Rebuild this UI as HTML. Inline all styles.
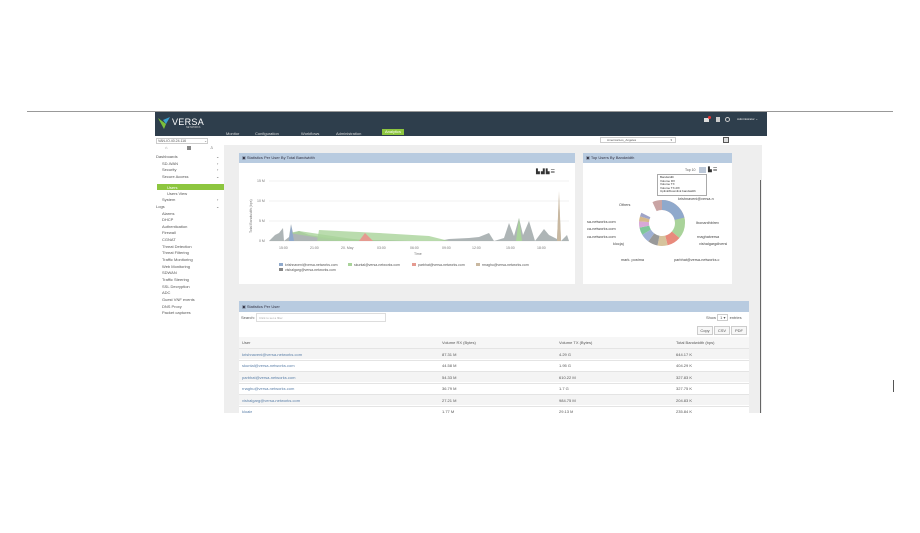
<!DOCTYPE html>
<html><head><meta charset="utf-8"><style>
*{margin:0;padding:0;box-sizing:border-box}
body{width:920px;height:533px;background:#fff;position:relative;overflow:hidden;font-family:"Liberation Sans",sans-serif;color:#555}
.a{position:absolute;white-space:nowrap}
.t{font-size:4px;line-height:5px}
.sb div{position:absolute;font-size:4px;line-height:5px;color:#555;white-space:nowrap}
</style></head><body>
<div class="a" style="left:27px;top:111px;width:866px;height:1px;background:#999"></div>
<!-- header -->
<div class="a" style="left:155px;top:112px;width:612px;height:24px;background:#2e3e4c"></div>
<svg class="a" style="left:157px;top:116px" width="14" height="14" viewBox="0 0 14 14"><path d="M1 2 L7 13 L9 8 Z" fill="#7bbf3a"/><path d="M6 4 L13 1 L9 8 Z" fill="#3aa0d0"/></svg>
<div class="a" style="left:172px;top:117px;font-size:9px;color:#fff;letter-spacing:.3px">VERSA</div>
<div class="a" style="left:186px;top:126px;font-size:2.5px;color:#ccc">NETWORKS</div>
<div class="a t" style="left:226px;top:131px;color:#ddd">Monitor</div>
<div class="a t" style="left:255px;top:131px;color:#ddd">Configuration</div>
<div class="a t" style="left:301px;top:131px;color:#ddd">Workflows</div>
<div class="a t" style="left:336px;top:131px;color:#ddd">Administration</div>
<div class="a t" style="left:382px;top:129px;width:22px;height:6px;background:#8dc63f;color:#fff;text-align:center;line-height:6px">Analytics</div>
<div class="a" style="left:704px;top:118px;width:5px;height:4px;background:#ddd"></div>
<div class="a" style="left:708px;top:116px;width:3px;height:3px;border-radius:2px;background:#e33"></div>
<div class="a" style="left:716px;top:117px;width:4px;height:5px;background:#ccc"></div>
<div class="a" style="left:725px;top:117px;width:5px;height:5px;border:1px solid #ccc;border-radius:3px"></div>
<div class="a" style="left:737px;top:117px;font-size:3px;color:#eee">Administrator ⌄</div>
<!-- toolbar -->
<div class="a t" style="left:156px;top:138px;width:52px;height:6px;border:1px solid #ccc;font-size:3.5px;line-height:5px;padding-left:1px">VAN-IO.40.24.116 <span style="float:right">⌄</span></div>
<div class="a t" style="left:600px;top:137px;width:76px;height:6px;border:1px solid #ccc;font-size:3px;padding-left:6px">America/Los_Angeles <span style="float:right;margin-right:3px">▾</span></div>
<div class="a" style="left:723px;top:137px;width:6px;height:6px;border:1px solid #555;background:#ddd"></div>
<!-- sidebar -->
<div class="a" style="left:165px;top:145px;font-size:4px;color:#777">⌂</div>
<div class="a" style="left:187px;top:146px;width:4px;height:4px;background:#888"></div>
<div class="a" style="left:210px;top:145px;font-size:4px;color:#777">♙</div>
<div class="a" style="left:157px;top:184px;width:67px;height:6px;background:#8dc63f"></div>
<div class="sb">
<div style="left:156px;top:154px">Dashboards</div><div style="left:216px;top:154px">⌄</div>
<div style="left:162px;top:161px">SD-WAN</div><div style="left:217px;top:161px">›</div>
<div style="left:162px;top:167px">Security</div><div style="left:217px;top:167px">›</div>
<div style="left:162px;top:174px">Secure Access</div><div style="left:216px;top:174px">⌄</div>
<div style="left:167px;top:185px;color:#fff">Users</div>
<div style="left:167px;top:191px">Users View</div>
<div style="left:162px;top:197px">System</div><div style="left:217px;top:197px">›</div>
<div style="left:156px;top:204px">Logs</div><div style="left:216px;top:204px">⌄</div>
<div style="left:162px;top:211px">Alarms</div>
<div style="left:162px;top:217px">DHCP</div>
<div style="left:162px;top:224px">Authentication</div>
<div style="left:162px;top:230px">Firewall</div>
<div style="left:162px;top:237px">CGNAT</div>
<div style="left:162px;top:244px">Threat Detection</div>
<div style="left:162px;top:250px">Threat Filtering</div>
<div style="left:162px;top:257px">Traffic Monitoring</div>
<div style="left:162px;top:264px">Web Monitoring</div>
<div style="left:162px;top:270px">SDWAN</div>
<div style="left:162px;top:277px">Traffic Steering</div>
<div style="left:162px;top:284px">SSL Decryption</div>
<div style="left:162px;top:290px">ADC</div>
<div style="left:162px;top:297px">Guest VNF events</div>
<div style="left:162px;top:304px">DNS Proxy</div>
<div style="left:162px;top:310px">Packet captures</div>
</div>
<!-- content bg -->
<div class="a" style="left:224px;top:145px;width:538px;height:268px;background:#eeeeee"></div>
<div class="a" style="left:760px;top:180px;width:1px;height:233px;background:#666"></div>
<!-- chart panel -->
<div class="a" style="left:239px;top:153px;width:336px;height:131px;background:#fff"></div>
<div class="a t" style="left:239px;top:153px;width:336px;height:10px;background:#b8cbe0;line-height:10px;padding-left:3px;color:#334">▣ Statistics Per User By Total Bandwidth</div>
<div class="a" style="left:536px;top:169px;font-size:5px;color:#333;letter-spacing:1px">▙▟▙☰</div>
<svg class="a" style="left:239px;top:163px" width="336" height="121">
<g font-size="3.5" fill="#777" font-family="Liberation Sans">
<text x="18" y="19">15 M</text><text x="18" y="39">10 M</text><text x="20" y="59">5 M</text><text x="20" y="79">0 M</text>
<text x="40" y="86">15:00</text><text x="71" y="86">21:00</text><text x="102" y="86">20. May</text><text x="138" y="86">03:00</text><text x="171" y="86">06:00</text><text x="203" y="86">09:00</text><text x="233" y="86">12:00</text><text x="267" y="86">15:00</text><text x="298" y="86">18:00</text>
<text x="175" y="92">Time</text>
<text transform="translate(13,70) rotate(-90)">Total Bandwidth (bps)</text>
</g>
<g stroke="#e3e3e3" stroke-width=".5"><line x1="30" y1="18" x2="330" y2="18"/><line x1="30" y1="38" x2="330" y2="38"/><line x1="30" y1="58" x2="330" y2="58"/><line x1="30" y1="78" x2="330" y2="78"/></g>
<path d="M30 78 L36 72 L40 70 L44 65 L45 78 L50 74 L52 61 L54 70 L60 68 L70 72 L90 75 L110 76 L130 77 L150 77 L170 78 L190 78 L200 78 L210 76 L230 75 L240 74 L250 70 L255 78 L265 75 L270 60 L275 73 L280 55 L284 72 L290 58 L296 78 L305 66 L310 72 L318 76 L320 35 L322 78 L328 72 L330 78 Z" fill="#9aa2a4" opacity=".8"/>
<path d="M50 70 L60 68 L100 74 L130 78 L100 78 Z" fill="#a9d39a" opacity=".8"/>
<path d="M78 78 L80 67 L140 70 L190 73 L210 78 Z" fill="#a9d39a" opacity=".8"/>
<path d="M120 78 L126 70 L134 78 Z" fill="#e59a90"/>
<path d="M277 78 L280 55 L283 78 Z" fill="#a9d39a"/>
<path d="M50 78 L52 62 L55 78 Z" fill="#8fa9cc"/>
<path d="M318 78 L320 28 L322 78 Z" fill="#c9b8a0"/>
<g font-size="3.5" fill="#555" font-family="Liberation Sans">
<rect x="40" y="100" width="4" height="3" fill="#8fa9cc"/><text x="46" y="103">krishnaveni@versa-networks.com</text>
<rect x="109" y="100" width="4" height="3" fill="#a9d39a"/><text x="115" y="103">skuntal@versa-networks.com</text>
<rect x="173" y="100" width="4" height="3" fill="#e59a90"/><text x="179" y="103">parbhat@versa-networks.com</text>
<rect x="237" y="100" width="4" height="3" fill="#c9b8a0"/><text x="243" y="103">rmaghu@versa-networks.com</text>
<rect x="40" y="105" width="4" height="3" fill="#888"/><text x="46" y="108">vishalgarg@versa-networks.com</text>
</g>
</svg>
<!-- top users panel -->
<div class="a" style="left:583px;top:153px;width:149px;height:131px;background:#fff"></div>
<div class="a t" style="left:583px;top:153px;width:149px;height:10px;background:#b8cbe0;line-height:10px;padding-left:3px;color:#334">▣ Top Users By Bandwidth</div>
<div class="a" style="left:685px;top:168px;font-size:3.5px">Top 10</div>
<div class="a" style="left:699px;top:167px;width:7px;height:6px;background:#bcc8d8"></div>
<div class="a" style="left:708px;top:167px;font-size:5px;color:#333;letter-spacing:1px">▙☰</div>
<div class="a" style="left:657px;top:174px;width:50px;height:22px;background:#fff;border:1px solid #aaa;font-size:3px;line-height:3.6px;padding:1px 2px;color:#333">Bandwidth<br>Volume RX<br>Volume TX<br>Volume TX-RX<br>Uplink/Downlink bandwidth</div>
<svg class="a" style="left:583px;top:163px" width="149" height="121">
<g transform="translate(79,60)" fill="none" stroke-width="10">
<circle r="18" stroke="#c9a4a4" stroke-dasharray="36 200" stroke-dashoffset="-77"/>
<circle r="18" stroke="#8fa9cc" stroke-dasharray="24 200" transform="rotate(-90)"/>
<circle r="18" stroke="#a9d39a" stroke-dasharray="17 200" stroke-dashoffset="-24" transform="rotate(-90)"/>
<circle r="18" stroke="#e88a7c" stroke-dasharray="11 200" stroke-dashoffset="-41" transform="rotate(-90)"/>
<circle r="18" stroke="#d6c39c" stroke-dasharray="8 200" stroke-dashoffset="-52" transform="rotate(-90)"/>
<circle r="18" stroke="#999" stroke-dasharray="8 200" stroke-dashoffset="-60" transform="rotate(-90)"/>
<circle r="18" stroke="#9eb0d4" stroke-dasharray="7 200" stroke-dashoffset="-68" transform="rotate(-90)"/>
<circle r="18" stroke="#7fc79a" stroke-dasharray="6 200" stroke-dashoffset="-75" transform="rotate(-90)"/>
<circle r="18" stroke="#d8a8d8" stroke-dasharray="5 200" stroke-dashoffset="-81" transform="rotate(-90)"/>
<circle r="18" stroke="#d6b98c" stroke-dasharray="4 200" stroke-dashoffset="-86" transform="rotate(-90)"/>
<circle r="18" stroke="#9fa4c8" stroke-dasharray="3 200" stroke-dashoffset="-90" transform="rotate(-90)"/>
</g>
<g font-size="3.8" fill="#444" font-family="Liberation Sans">
<text x="36" y="43">Others</text><text x="95" y="37">krishnaveni@versa-n</text><text x="113" y="61">Ibonanthblrev</text>
<text x="4" y="60">sa-networks.com</text><text x="4" y="67">ca-networks.com</text><text x="4" y="75">ca-networks.com</text>
<text x="30" y="82">klocjaj</text><text x="114" y="75">rnaghatversa</text><text x="116" y="82">vishalgargdiversi</text>
<text x="38" y="98">mark. postma</text><text x="91" y="98">parbhat@versa-networks.c</text>
</g>
</svg>
<!-- table panel -->
<div class="a" style="left:239px;top:301px;width:510px;height:112px;background:#fff"></div>
<div class="a t" style="left:239px;top:301px;width:510px;height:11px;background:#b8cbe0;line-height:11px;padding-left:3px;color:#334">▣ Statistics Per User</div>
<div class="a t" style="left:241px;top:315px">Search:</div>
<div class="a t" style="left:256px;top:313px;width:130px;height:9px;border:1px solid #ddd;font-size:3px;line-height:8px;padding-left:2px;color:#aaa">Click to set a filter</div>
<div class="a t" style="left:706px;top:315px">Show <span style="border:1px solid #ccc;padding:0 2px">1 ▾</span> entries</div>
<div class="a t" style="left:697px;top:326px;width:16px;height:9px;border:1px solid #ccc;background:#f7f7f7;text-align:center;line-height:8px">Copy</div>
<div class="a t" style="left:714px;top:326px;width:16px;height:9px;border:1px solid #ccc;background:#f7f7f7;text-align:center;line-height:8px">CSV</div>
<div class="a t" style="left:731px;top:326px;width:16px;height:9px;border:1px solid #ccc;background:#f7f7f7;text-align:center;line-height:8px">PDF</div>
<div class="a" style="left:239px;top:337px;width:510px;height:11px;background:#f6f6f6"></div>
<div class="a t" style="left:242px;top:340px">User</div><div class="a t" style="left:442px;top:340px">Volume RX (Bytes)</div><div class="a t" style="left:559px;top:340px">Volume TX (Bytes)</div><div class="a t" style="left:676px;top:340px">Total Bandwidth (bps)</div>
<div class="a" style="left:239px;top:348px;width:510px;height:11px;background:#f4f4f4;border-top:1px solid #e4e4e4"></div>
<div class="a" style="left:239px;top:371px;width:510px;height:11px;background:#f4f4f4;border-top:1px solid #e4e4e4"></div>
<div class="a" style="left:239px;top:394px;width:510px;height:11px;background:#f4f4f4;border-top:1px solid #e4e4e4"></div>
<div class="a" style="left:239px;top:360px;width:510px;height:1px;background:#e4e4e4"></div>
<div class="a" style="left:239px;top:383px;width:510px;height:1px;background:#e4e4e4"></div>
<div class="a" style="left:239px;top:406px;width:510px;height:1px;background:#e4e4e4"></div>
<div class="a t" style="left:242px;top:352px;color:#5a7fa8">krishnaveni@versa-networks.com</div><div class="a t" style="left:442px;top:352px">87.31 M</div><div class="a t" style="left:559px;top:352px">4.29 G</div><div class="a t" style="left:676px;top:352px">644.17 K</div>
<div class="a t" style="left:242px;top:363px;color:#5a7fa8">skuntal@versa-networks.com</div><div class="a t" style="left:442px;top:363px">44.58 M</div><div class="a t" style="left:559px;top:363px">1.95 G</div><div class="a t" style="left:676px;top:363px">404.29 K</div>
<div class="a t" style="left:242px;top:375px;color:#5a7fa8">parbhat@versa-networks.com</div><div class="a t" style="left:442px;top:375px">54.33 M</div><div class="a t" style="left:559px;top:375px">610.22 M</div><div class="a t" style="left:676px;top:375px">327.83 K</div>
<div class="a t" style="left:242px;top:386px;color:#5a7fa8">rnaghu@versa-networks.com</div><div class="a t" style="left:442px;top:386px">36.79 M</div><div class="a t" style="left:559px;top:386px">1.7 G</div><div class="a t" style="left:676px;top:386px">327.75 K</div>
<div class="a t" style="left:242px;top:398px;color:#5a7fa8">vishalgarg@versa-networks.com</div><div class="a t" style="left:442px;top:398px">27.21 M</div><div class="a t" style="left:559px;top:398px">984.75 M</div><div class="a t" style="left:676px;top:398px">204.83 K</div>
<div class="a t" style="left:242px;top:409px;color:#5a7fa8;height:4px;overflow:hidden">kloaje</div><div class="a t" style="left:442px;top:409px;height:4px;overflow:hidden">1.77 M</div><div class="a t" style="left:559px;top:409px;height:4px;overflow:hidden">29.13 M</div><div class="a t" style="left:676px;top:409px;height:4px;overflow:hidden">235.84 K</div>
<div class="a" style="left:224px;top:413px;width:545px;height:20px;background:#fff"></div>
<div class="a" style="left:893px;top:380px;width:1px;height:12px;background:#555"></div>
</body></html>
